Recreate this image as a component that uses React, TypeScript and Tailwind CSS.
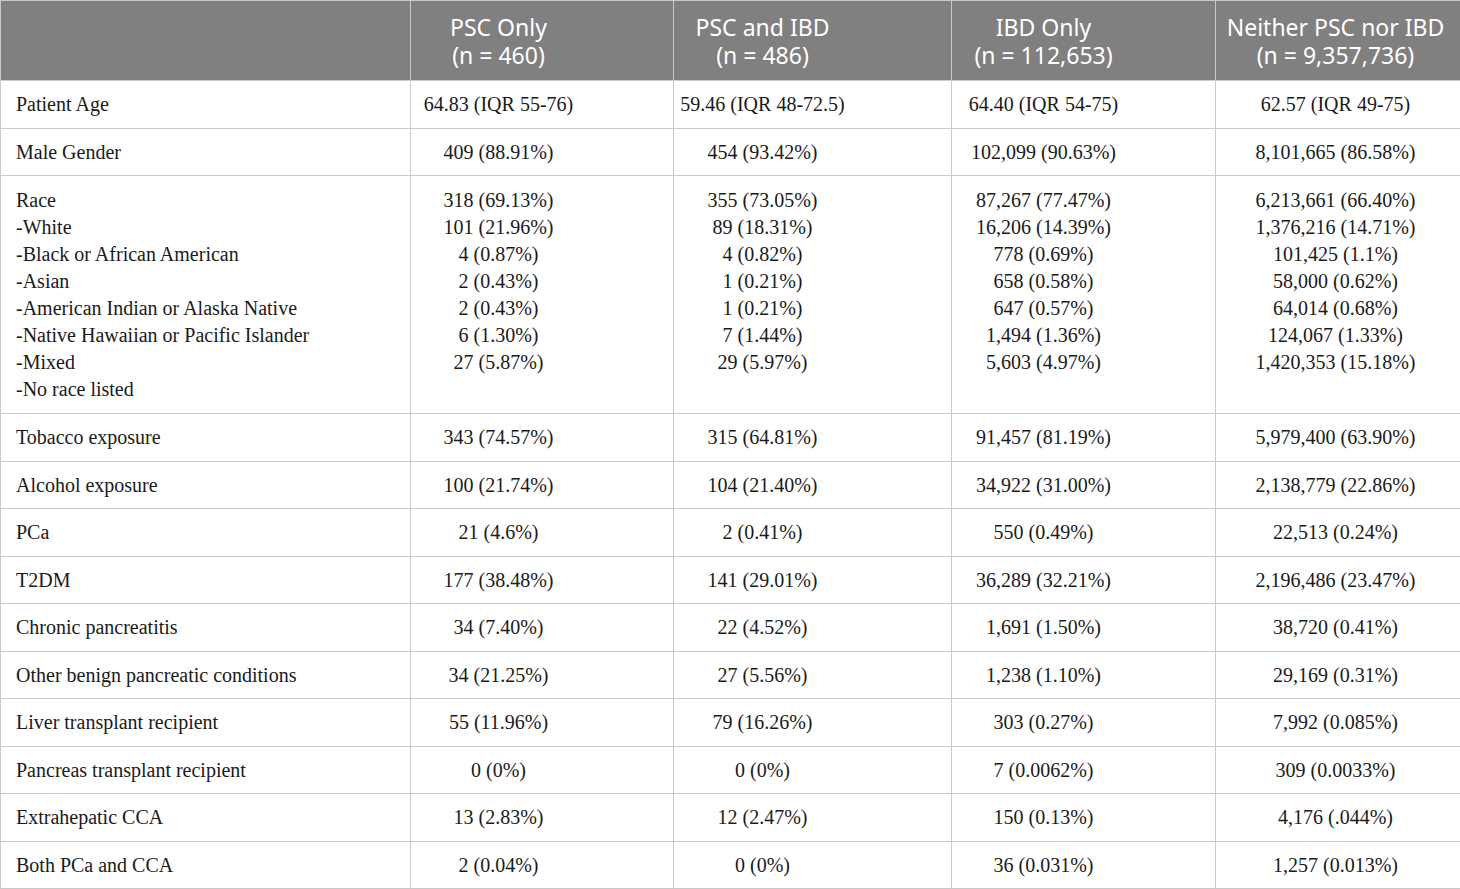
const cols = [
  { head: "PSC Only\n(n = 460)", pad: "pl-[5px] pr-[92px]" },
  { head: "PSC and IBD\n(n = 486)", pad: "pl-[5px] pr-[105px]" },
  { head: "IBD Only\n(n = 112,653)", pad: "pl-[5px] pr-[85px]" },
  { head: "Neither PSC nor IBD\n(n = 9,357,736)", pad: "pl-[3px] pr-[8px]" },
];

const rows: { label: string[]; values: string[][]; h: string }[] = [
  { label: ["Patient Age"], values: [["64.83 (IQR 55-76)"], ["59.46 (IQR 48-72.5)"], ["64.40 (IQR 54-75)"], ["62.57 (IQR 49-75)"]], h: "h-[48px]" },
  { label: ["Male Gender"], values: [["409 (88.91%)"], ["454 (93.42%)"], ["102,099 (90.63%)"], ["8,101,665 (86.58%)"]], h: "h-[47px]" },
  {
    label: ["Race", "-White", "-Black or African American", "-Asian", "-American Indian or Alaska Native", "-Native Hawaiian or Pacific Islander", "-Mixed", "-No race listed"],
    values: [
      ["318 (69.13%)", "101 (21.96%)", "4 (0.87%)", "2 (0.43%)", "2 (0.43%)", "6 (1.30%)", "27 (5.87%)"],
      ["355 (73.05%)", "89 (18.31%)", "4 (0.82%)", "1 (0.21%)", "1 (0.21%)", "7 (1.44%)", "29 (5.97%)"],
      ["87,267 (77.47%)", "16,206 (14.39%)", "778 (0.69%)", "658 (0.58%)", "647 (0.57%)", "1,494 (1.36%)", "5,603 (4.97%)"],
      ["6,213,661 (66.40%)", "1,376,216 (14.71%)", "101,425 (1.1%)", "58,000 (0.62%)", "64,014 (0.68%)", "124,067 (1.33%)", "1,420,353 (15.18%)"],
    ],
    h: "h-[238px]",
  },
  { label: ["Tobacco exposure"], values: [["343 (74.57%)"], ["315 (64.81%)"], ["91,457 (81.19%)"], ["5,979,400 (63.90%)"]], h: "h-[48px]" },
  { label: ["Alcohol exposure"], values: [["100 (21.74%)"], ["104 (21.40%)"], ["34,922 (31.00%)"], ["2,138,779 (22.86%)"]], h: "h-[47px]" },
  { label: ["PCa"], values: [["21 (4.6%)"], ["2 (0.41%)"], ["550 (0.49%)"], ["22,513 (0.24%)"]], h: "h-[48px]" },
  { label: ["T2DM"], values: [["177 (38.48%)"], ["141 (29.01%)"], ["36,289 (32.21%)"], ["2,196,486 (23.47%)"]], h: "h-[47px]" },
  { label: ["Chronic pancreatitis"], values: [["34 (7.40%)"], ["22 (4.52%)"], ["1,691 (1.50%)"], ["38,720 (0.41%)"]], h: "h-[48px]" },
  { label: ["Other benign pancreatic conditions"], values: [["34 (21.25%)"], ["27 (5.56%)"], ["1,238 (1.10%)"], ["29,169 (0.31%)"]], h: "h-[47px]" },
  { label: ["Liver transplant recipient"], values: [["55 (11.96%)"], ["79 (16.26%)"], ["303 (0.27%)"], ["7,992 (0.085%)"]], h: "h-[48px]" },
  { label: ["Pancreas transplant recipient"], values: [["0 (0%)"], ["0 (0%)"], ["7 (0.0062%)"], ["309 (0.0033%)"]], h: "h-[47px]" },
  { label: ["Extrahepatic CCA"], values: [["13 (2.83%)"], ["12 (2.47%)"], ["150 (0.13%)"], ["4,176 (.044%)"]], h: "h-[48px]" },
  { label: ["Both PCa and CCA"], values: [["2 (0.04%)"], ["0 (0%)"], ["36 (0.031%)"], ["1,257 (0.013%)"]], h: "h-[47px]" },
];

export default function App() {
  return (
    <div className="w-[1460px] h-[889px] bg-white overflow-hidden">
      <table className="w-[1460px] table-fixed border-collapse text-[20px] leading-[27px] text-[#1a1a1a] [font-family:'Liberation_Serif',serif]">
        <colgroup>
          <col className="w-[410px]" />
          <col className="w-[263px]" />
          <col className="w-[278px]" />
          <col className="w-[264px]" />
          <col className="w-[245px]" />
        </colgroup>
        <thead>
          <tr className="h-[80px] bg-[#808080] text-white">
            <th className="border border-[#c9c9c9]" />
            {cols.map((c) => (
              <th
                key={c.head}
                className={`border border-[#c9c9c9] ${c.pad} text-center align-middle font-normal whitespace-pre-line text-[23px] leading-[28px] [font-family:'Noto_Sans',sans-serif]`}
              >
                {c.head}
              </th>
            ))}
          </tr>
        </thead>
        <tbody>
          {rows.map((r) => {
            const multi = r.label.length > 1;
            const va = multi ? "align-top pt-[11px]" : "align-middle";
            return (
              <tr key={r.label[0]} className={r.h}>
                <td className={`border border-[#c9c9c9] pl-[15px] pr-2 text-left whitespace-nowrap ${va}`}>
                  {r.label.map((l) => (
                    <div key={l}>{l}</div>
                  ))}
                </td>
                {r.values.map((v, i) => (
                  <td key={i} className={`border border-[#c9c9c9] ${cols[i].pad} text-center whitespace-nowrap ${va}`}>
                    {v.map((t, j) => (
                      <div key={j}>{t}</div>
                    ))}
                  </td>
                ))}
              </tr>
            );
          })}
        </tbody>
      </table>
    </div>
  );
}
